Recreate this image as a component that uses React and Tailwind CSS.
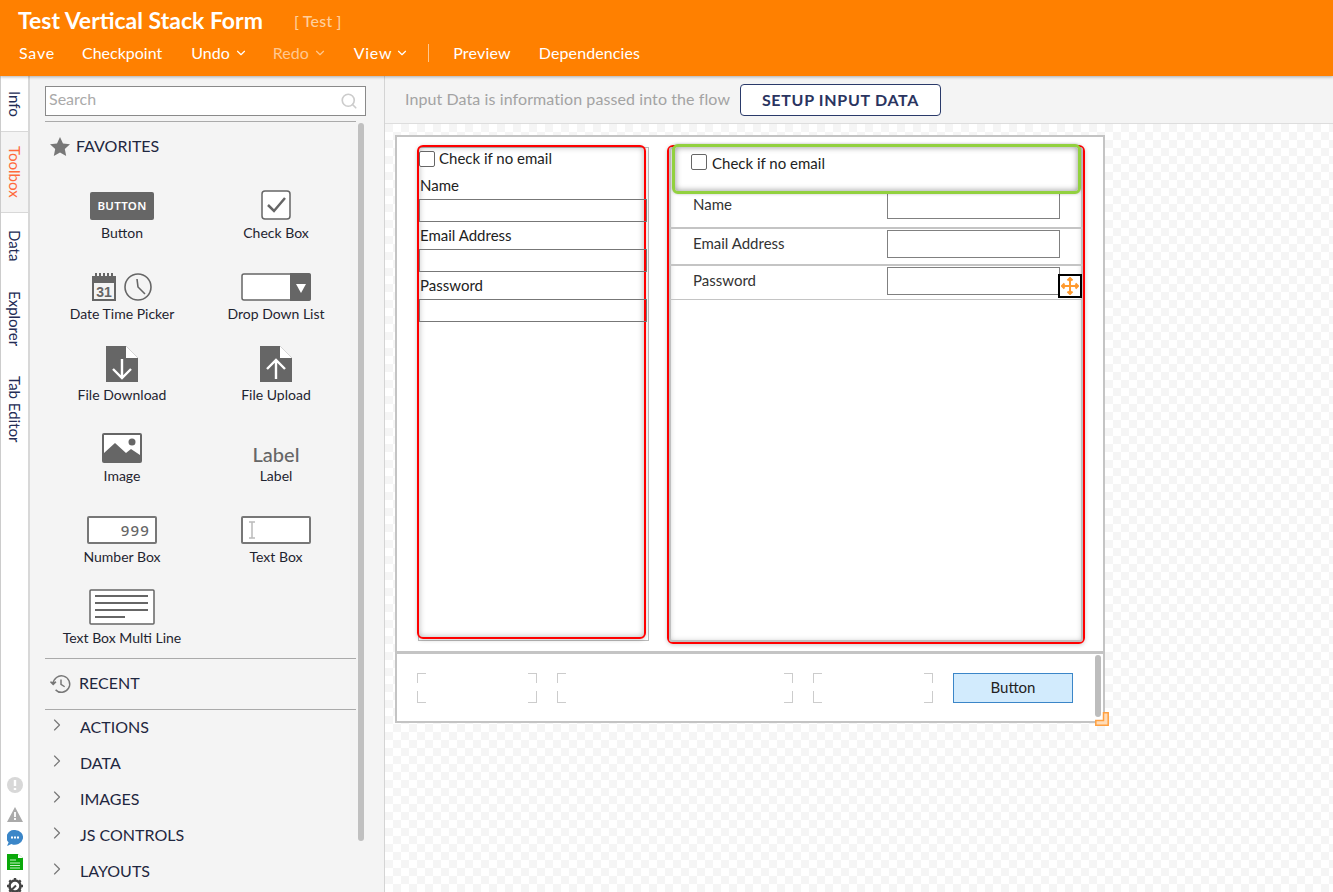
import React from "react";
import { ChevronDown, ChevronRight, Search } from "lucide-react";

function Tool({ label, icon }) {
  return (
    <div className="flex flex-col items-center h-[81px]">
      <div className="h-[34px] flex items-end justify-center">{icon}</div>
      <div className="mt-[4px] text-[14px] leading-[18px] text-[#1f2430] whitespace-nowrap">{label}</div>
    </div>
  );
}
const G = "#666666";
const icons = {
  button: <div className="w-[64px] h-[28px] bg-[#666] rounded-[2px] text-white text-[11.5px] font-semibold tracking-[0.3px] flex items-center justify-center font-['Noto_Sans',sans-serif]">BUTTON</div>,
  check: <svg width="30" height="30" viewBox="0 0 30 30"><rect x="1" y="1" width="28" height="28" rx="3" fill="#fff" stroke={G} strokeWidth="1.5"/><path d="M7 15l6 6L24 8" fill="none" stroke={G} strokeWidth="2.5"/></svg>,
  date: <svg width="60" height="28" viewBox="0 0 60 28"><rect x="0" y="3" width="24" height="25" fill={G}/><path d="M4 0v6M8 0v6M12 0v6M16 0v6M20 0v6" stroke={G} strokeWidth="2"/><rect x="2" y="10" width="20" height="16" fill="#f4f4f4"/><text x="12" y="24" textAnchor="middle" fontSize="14" fontWeight="700" fill={G} fontFamily="Liberation Sans">31</text><circle cx="46" cy="14" r="13" fill="#f4f4f4" stroke={G} strokeWidth="1.6"/><path d="M45 6l1 8 7 7" fill="none" stroke={G} strokeWidth="1.6"/></svg>,
  drop: <svg width="70" height="28" viewBox="0 0 70 28"><rect x="1" y="1" width="68" height="26" rx="2" fill="#fff" stroke={G} strokeWidth="1.5"/><path d="M49 0h19a2 2 0 0 1 2 2v24a2 2 0 0 1-2 2H49z" fill={G}/><path d="M55 11h10l-5 9z" fill="#fff"/></svg>,
  down: <svg width="32" height="36" viewBox="0 0 32 36"><path d="M0 0h20l12 12v24H0z" fill={G}/><path d="M20 0l12 12H20z" fill="#fff"/><path d="M16 13v19M7 23l9 9 9-9" fill="none" stroke="#fff" strokeWidth="2.4"/></svg>,
  up: <svg width="32" height="36" viewBox="0 0 32 36"><path d="M0 0h20l12 12v24H0z" fill={G}/><path d="M20 0l12 12H20z" fill="#fff"/><path d="M16 33V14M7 23l9-9 9 9" fill="none" stroke="#fff" strokeWidth="2.4"/></svg>,
  image: <svg width="40" height="30" viewBox="0 0 40 30"><rect width="40" height="30" rx="2" fill={G}/><rect x="2" y="2" width="36" height="24" fill="#fff"/><path d="M2 20l11-10 11 10 5-4 9 6v6H2z" fill={G}/><circle cx="30" cy="9" r="3.5" fill={G}/></svg>,
  label: <div className="text-[20px] leading-[28px] font-medium text-[#666] -mb-[5px]">Label</div>,
  number: <div className="w-[70px] h-[28px] border-2 border-[#777] rounded-[2px] bg-white flex items-center justify-end pr-[5px] text-[15px] font-medium text-[#666] tracking-[1.2px] font-['Noto_Sans',sans-serif]">999</div>,
  text: <div className="w-[70px] h-[28px] border-2 border-[#777] rounded-[2px] bg-white flex items-center pl-[4px]"><svg width="10" height="18" viewBox="0 0 10 18"><path d="M2 1h6M5 1v16M2 17h6" stroke="#bbb" strokeWidth="1.5" fill="none"/></svg></div>,
  multi: <svg width="66" height="36" viewBox="0 0 66 36"><rect x="1" y="1" width="64" height="34" rx="1" fill="#fff" stroke={G} strokeWidth="1.5"/><path d="M6 7h53M6 14h53M6 21h53M6 28h30" stroke={G} strokeWidth="2.2"/></svg>,
};

function Cat({ children }) {
  return (
    <div className="flex items-start h-[36px] text-[16px] leading-[22px] text-[#1f2740]">
      <ChevronRight size={20} strokeWidth={1.4} className="text-[#777] ml-[2px]" />
      <span className="ml-[13px] pt-[1px]">{children}</span>
    </div>
  );
}

function Bracket({ w }) {
  return (
    <div className={`relative h-[30px] ${w}`}>
      <div className="absolute left-0 top-0 w-[9px] h-[10px] border-l border-t border-[#ccc]" />
      <div className="absolute left-0 bottom-0 w-[9px] h-[12px] border-l border-b border-[#ccc]" />
      <div className="absolute right-0 top-0 w-[9px] h-[10px] border-r border-t border-[#ccc]" />
      <div className="absolute right-0 bottom-0 w-[9px] h-[12px] border-r border-b border-[#ccc]" />
    </div>
  );
}

function Check() { return <span className="w-[16px] h-[16px] border border-[#666] rounded-[2px] bg-white shrink-0" />; }

function Stack({ label }) {
  return (
    <div className="h-[50px]">
      <div className="h-[20px] pl-[1px] text-[15px] leading-[20px] text-[#222]">{label}</div>
      <div className="h-[23px] mt-[4px] -mr-[3px] border border-[#777]" />
    </div>
  );
}

function Row({ label, className }) {
  return (
    <div className={`pl-[23px] border-[#c4c4c4] ${className}`}>
      <div className="flex items-center h-[28px]">
        <span className="w-[194px] text-[15px] text-[#333] -mt-[2px]">{label}</span>
        <div className="w-[173px] h-[28px] border border-[#808080] bg-white" />
      </div>
    </div>
  );
}

export default function App() {
  return (
    <div className="w-[1333px] h-[892px] overflow-hidden bg-white font-['Lato','Noto_Sans',sans-serif] flex flex-col">
      <header className="h-[76px] bg-[#ff8000] shrink-0 text-white pl-[18px] shadow-[0_1px_3px_rgba(0,0,0,0.3)] z-10 relative">
        <div className="flex items-center h-[42px] -mt-[1px] mb-[1px]">
          <span className="text-[23px] leading-[28px] font-bold">Test Vertical Stack Form</span>
          <span className="ml-[31px] mt-[1px] text-[16px] tracking-[0.2px] font-medium text-[#ffcf9c]">[ Test ]</span>
        </div>
        <nav className="flex items-center text-[16px] leading-[22px] pl-[1px]">
          <span className="w-[35px] tracking-[0.8px]">Save</span>
          <span className="ml-[28px]">Checkpoint</span>
          <span className="ml-[29px] flex items-center">Undo<ChevronDown size={14} className="ml-[4px]" /></span>
          <span className="ml-[25px] flex items-center text-[#ffc88f]">Redo<ChevronDown size={14} className="ml-[4px]" /></span>
          <span className="ml-[27px] flex items-center"><span className="tracking-[0.7px]">View</span><ChevronDown size={14} className="ml-[3px]" /></span>
          <span className="ml-[19px] h-[18px] border-l border-[#ffc88f]" />
          <span className="ml-[24px] tracking-[0.2px]">Preview</span>
          <span className="ml-[28px] tracking-[0.1px]">Dependencies</span>
        </nav>
      </header>
      <div className="flex flex-1 min-h-0">
        <div className="w-[30px] shrink-0 border-l border-r-2 border-l-[#ccc] border-r-[#d8d8d8] flex flex-col relative text-[15px] leading-[18px] text-[#232c55]">
          <div className="h-[55px] flex items-center justify-center pl-[1px]"><span className="[writing-mode:vertical-rl] whitespace-nowrap">Info</span></div>
          <div className="h-[82px] flex items-center justify-center pl-[1px] bg-[#f4f4f4] border-y border-[#d8d8d8] text-[#ff6a3c]"><span className="[writing-mode:vertical-rl] whitespace-nowrap">Toolbox</span></div>
          <div className="flex flex-col items-center pl-[1px] pt-[17px] gap-[30px]">
            <span className="[writing-mode:vertical-rl] whitespace-nowrap">Data</span>
            <span className="[writing-mode:vertical-rl] whitespace-nowrap">Explorer</span>
            <span className="[writing-mode:vertical-rl] whitespace-nowrap -mt-[1px]">Tab Editor</span>
          </div>
          <div className="absolute left-[6px] top-[701px] flex flex-col items-center w-[16px]">
            <svg width="16" height="16" viewBox="0 0 16 16"><circle cx="8" cy="8" r="8" fill="#d8d8d8"/><path d="M8 3v6M8 11v2" stroke="#fff" strokeWidth="2.4"/></svg>
            <svg width="16" height="15" viewBox="0 0 16 15" className="mt-[14px]"><path d="M8 0l8 15H0z" fill="#aaa"/><path d="M8 5v5M8 11v2" stroke="#fff" strokeWidth="1.8"/></svg>
            <svg width="16" height="16" viewBox="0 0 16 16" className="mt-[8px]"><path d="M8 0a8 7.4 0 1 1-3.6 14L0 16l1.600-3.600A8 7.4 0 0 1 8 0z" fill="#3b86c8"/><path d="M4 7.500h2M7 7.500h2M10 7.500h2" stroke="#fff" strokeWidth="1.800"/></svg>
            <svg width="16" height="16" viewBox="0 0 16 16" className="mt-[8px]"><path d="M0 0h11l5 4v12H0z" fill="#0aa80a"/><path d="M11 0v4h5z" fill="#fff"/><path d="M3 6h6M3 9h10M3 11.500h10M3 14h10" stroke="#c8f0c8" strokeWidth="1.200"/></svg>
            <svg width="16" height="16" viewBox="0 0 16 16" className="mt-[8px]"><circle cx="8" cy="8" r="5.500" fill="#fff" stroke="#444" strokeWidth="2.600"/><path d="M8 0v3M8 13v3M0 8h3M13 8h3M2.300 2.300l2 2M11.700 11.700l2 2M2.300 13.700l2-2M11.700 4.300l2-2" stroke="#444" strokeWidth="2.400"/><path d="M5 11.500l4-4" stroke="#444" strokeWidth="2"/></svg>
          </div>
        </div>

        <aside className="w-[355px] shrink-0 bg-[#f4f4f4] border-r border-[#d4d4d4] relative pl-[15px]">
          <div className="w-[321px] h-[30px] mt-[10px] border border-[#8a8a8a] bg-white flex items-center justify-between pl-[3px] pr-[7px]">
            <span className="text-[16px] leading-[26px] -mt-[4px] text-[#aaa]">Search</span>
            <Search size={18} strokeWidth={2.200} className="text-[#ccc]" />
          </div>
          <div className="w-[311px] border-t border-[#aaa] mt-[5px]" />
          <div className="flex items-center h-[48px] pl-[5px] text-[16px] text-[#1f2740]">
            <svg width="20" height="19" viewBox="0 0 20 19"><path d="M10 0l3 6.500 7 .8-5.200 4.700 1.400 7L10 15.500 3.800 19l1.400-7L0 7.300l7-.8z" fill="#777"/></svg>
            <span className="ml-[6px]">FAVORITES</span>
          </div>
          <div className="w-[308px] grid grid-cols-2 mt-[16px]">
            <Tool label="Button" icon={icons.button} />
            <Tool label="Check Box" icon={icons.check} />
            <Tool label="Date Time Picker" icon={icons.date} />
            <Tool label="Drop Down List" icon={icons.drop} />
            <Tool label="File Download" icon={icons.down} />
            <Tool label="File Upload" icon={icons.up} />
            <Tool label="Image" icon={icons.image} />
            <Tool label="Label" icon={icons.label} />
            <Tool label="Number Box" icon={icons.number} />
            <Tool label="Text Box" icon={icons.text} />
            <Tool label="Text Box Multi Line" icon={icons.multi} />
          </div>
          <div className="w-[311px] border-t border-[#aaa] -mt-[14px]" />
          <div className="flex items-center h-[50px] pl-[5px] text-[16px] text-[#1f2740]">
            <svg width="22" height="22" viewBox="0 0 24 24" fill="none" stroke="#777" strokeWidth="1.600"><path d="M3.500 12a9 9 0 1 1 2.600 6.400"/><path d="M0.500 9.500l3 3 3-3" fill="#777"/><path d="M12 7v5.500l4 2.500"/></svg>
            <span className="ml-[7px] -mt-[2px]">RECENT</span>
          </div>
          <div className="w-[311px] border-t border-[#aaa] mb-[5px]" />
          <Cat>ACTIONS</Cat>
          <Cat>DATA</Cat>
          <Cat>IMAGES</Cat>
          <Cat>JS CONTROLS</Cat>
          <Cat>LAYOUTS</Cat>
          <div className="absolute left-[328px] top-[47px] w-[6px] h-[718px] rounded-[3px] bg-[#c0c0c0]" />
        </aside>

        <main className="flex-1 min-w-0 flex flex-col">
          <div className="h-[48px] shrink-0 bg-[#f4f4f4] border-b border-[#ddd] flex items-center pl-[20px]">
            <span className="w-[325px] -mt-[2px] whitespace-nowrap text-[16px] tracking-[0.09px] text-[#a3a3a3]">Input Data is information passed into the flow</span>
            <div className="ml-[10px] w-[201px] h-[32px] border border-[#2a3a6a] rounded-[4px] bg-white flex items-center justify-center text-[16px] font-bold tracking-[0.7px] text-[#2a3460]">SETUP INPUT DATA</div>
          </div>
          <div className="flex-1 pl-[10px] pt-[11px] bg-[length:16px_16px] bg-[conic-gradient(transparent_25%,#f5f5f5_0_50%,transparent_0_75%,#f5f5f5_0)]">
            <div className="relative w-[710px] h-[588px] border-2 border-[#c4c4c4] bg-white flex flex-col">
              <div className="h-[517px] shrink-0 relative flex border-b-[3px] border-[#c4c4c4]">
                <div className="absolute left-[21px] top-[10px] w-[231px] h-[494px] border border-[#bbb]" />
                <div className="ml-[20px] mt-[8px] relative w-[229px] h-[494px] rounded-[6px] border-2 border-[#f00] shadow-[inset_0_0_6px_rgba(0,0,0,0.3),0_1px_4px_rgba(0,0,0,0.2)]">
                  <div className="flex items-center h-[22px] text-[15px] text-[#222]"><span className="mt-[2px] flex"><Check /></span><span className="ml-[4px]">Check if no email</span></div>
                  <div className="h-[6px]" />
                  <Stack label="Name" />
                  <Stack label="Email Address" />
                  <Stack label="Password" />
                </div>
                <div className="ml-[21px] mt-[8px] relative w-[418px] h-[499px] rounded-[6px] border-2 border-[#f00] shadow-[inset_0_0_6px_rgba(0,0,0,0.3),0_1px_4px_rgba(0,0,0,0.2)] pl-[1px]">
                  <div className="absolute inset-0 rounded-[3px] border-2 border-[#c0c0c0]" />
                  <div className="h-[36px]" />
                  <Row label="Name" className="relative h-[46px] pt-[8px] border-b-2" />
                  <Row label="Email Address" className="relative h-[37px] pt-[1px] border-b-2" />
                  <Row label="Password" className="relative h-[34px] pt-[1px] border-b" />
                  <div className="absolute left-[3px] -top-[3px] w-[409px] h-[50px] rounded-[6px] border-[3px] border-[#92d13f] shadow-[inset_0_0_6px_rgba(0,0,0,0.45),0_0_3px_rgba(0,0,0,0.25)] bg-white flex items-start pl-[16px] pt-[7px] text-[15px] text-[#222]">
                    <Check /><span className="ml-[5px] -mt-[2px]">Check if no email</span>
                  </div>
                  <div className="absolute left-[389px] top-[127px] w-[24px] h-[24px] border-2 border-black bg-white flex items-center justify-center">
                    <svg width="18" height="18" viewBox="0 0 18 18" fill="none" stroke="#ff9a2e" strokeWidth="2"><path d="M9 1v16M1 9h16"/><path d="M6.500 3.500L9 1l2.500 2.500M6.500 14.500L9 17l2.500-2.500M3.500 6.500L1 9l2.500 2.500M14.500 6.500L17 9l-2.500 2.500"/></svg>
                  </div>
                </div>
              </div>
              <div className="flex items-center flex-1 pl-[20px] relative">
                <Bracket w="w-[120px]" />
                <div className="w-[20px]" />
                <Bracket w="w-[236px]" />
                <div className="w-[20px]" />
                <Bracket w="w-[120px]" />
                <div className="ml-[20px] w-[120px] h-[30px] bg-[#d2ebfd] border border-[#3b86c8] flex items-center justify-center text-[15px] text-[#222]">Button</div>
                <div className="absolute right-[2px] top-[1px] w-[6px] h-[62px] rounded-[3px] bg-[#bdbdbd]" />
              </div>
              <svg width="14" height="14" viewBox="0 0 14 14" className="absolute -right-[6px] -bottom-[5px]"><path d="M8.500 .8H13.200V13.200H.8V8.500H8.500Z" fill="#ffdcb8" stroke="#ffa040" strokeWidth="1.500"/></svg>
            </div>
          </div>
        </main>
      </div>
    </div>
  );
}
